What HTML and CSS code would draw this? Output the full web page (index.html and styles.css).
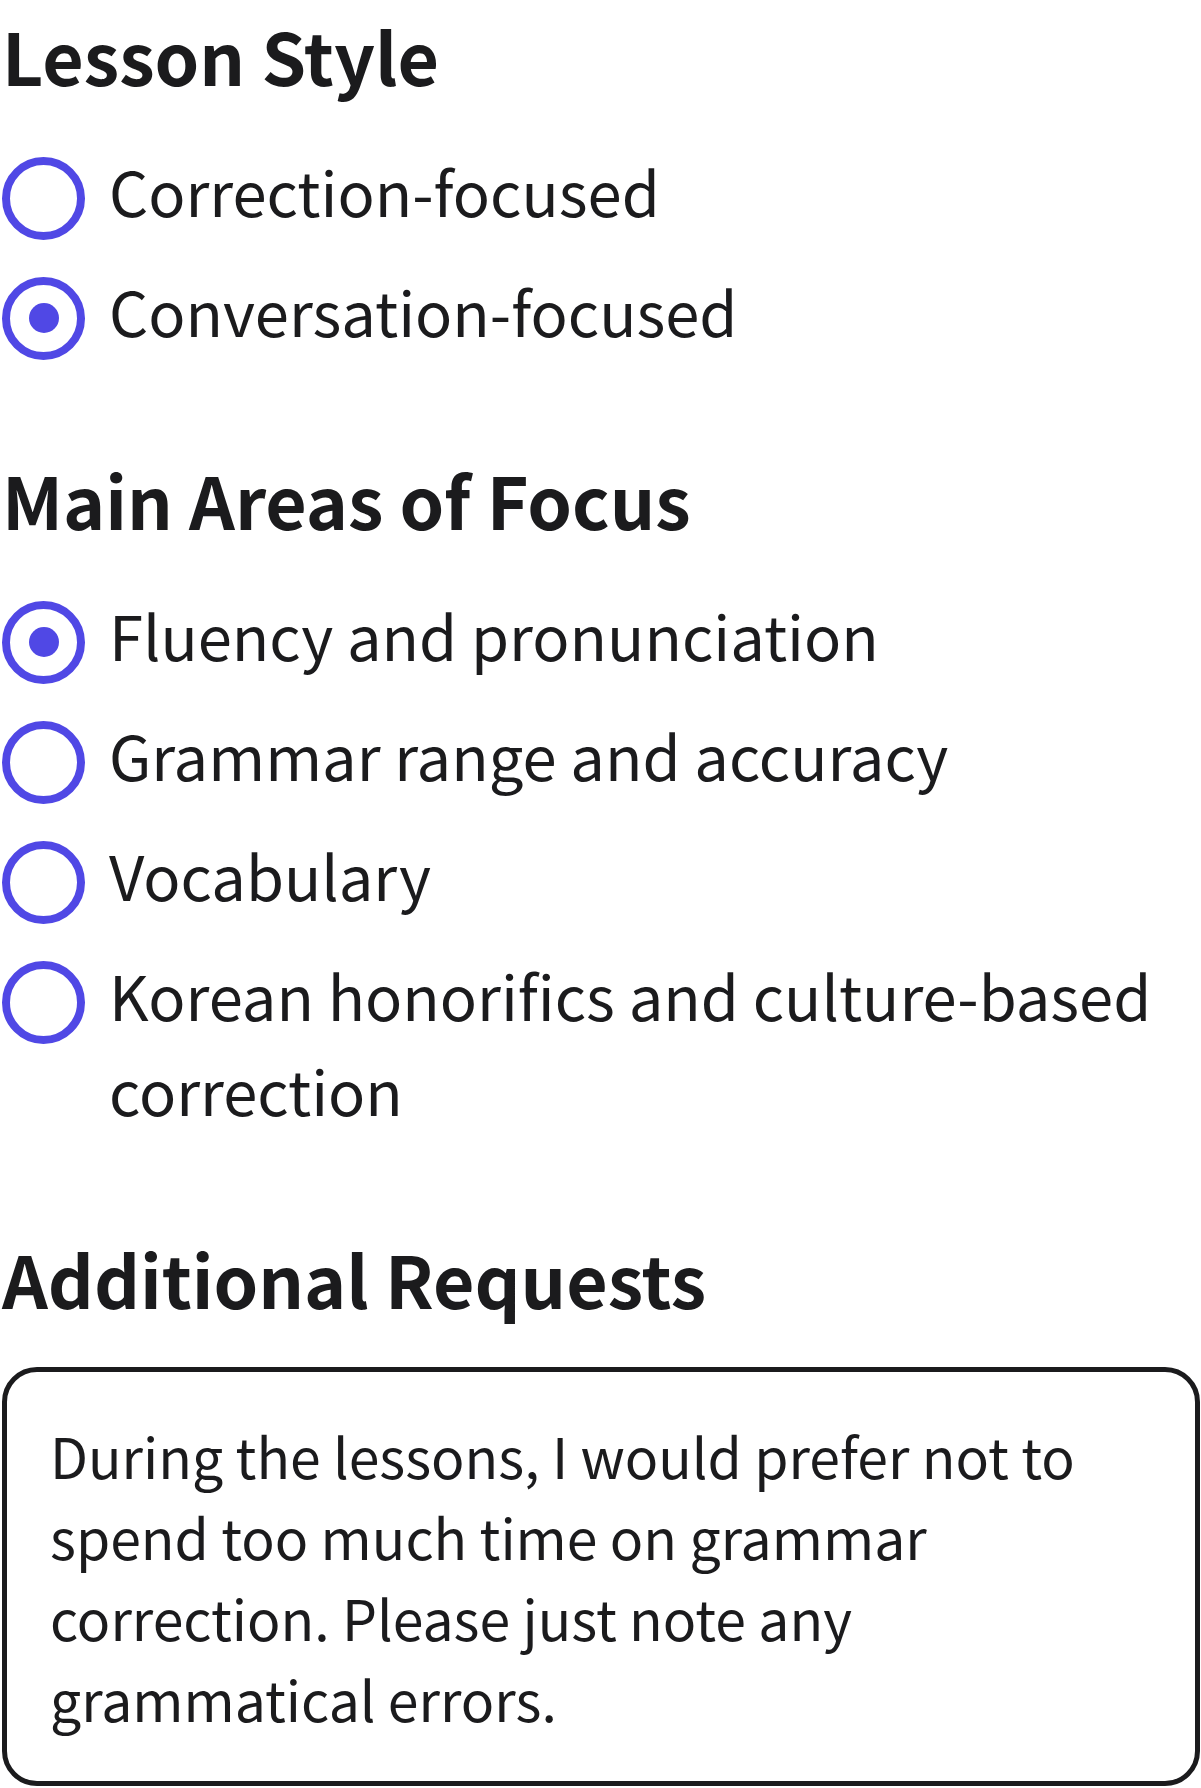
FILE: index.html
```html
<!DOCTYPE html>
<html lang="en">
<head>
<meta charset="utf-8">
<title>Lesson preferences</title>
<link rel="stylesheet" href="styles.css">
</head>
<body>
<main class="page">
  <section class="group">
    <h2 class="heading">Lesson Style</h2>
    <ul class="options">
      <li class="option"><span class="radio"></span><span class="label">Correction-focused</span></li>
      <li class="option"><span class="radio checked"></span><span class="label">Conversation-focused</span></li>
    </ul>
  </section>
  <section class="group">
    <h2 class="heading">Main Areas of Focus</h2>
    <ul class="options">
      <li class="option"><span class="radio checked"></span><span class="label">Fluency and pronunciation</span></li>
      <li class="option"><span class="radio"></span><span class="label">Grammar range and accuracy</span></li>
      <li class="option"><span class="radio"></span><span class="label">Vocabulary</span></li>
      <li class="option"><span class="radio"></span><span class="label">Korean honorifics and culture-based correction</span></li>
    </ul>
  </section>
  <section class="group">
    <h2 class="heading">Additional Requests</h2>
    <div class="textbox">During the lessons, I would prefer not to spend too much time on grammar correction. Please just note any grammatical errors.</div>
  </section>
</main>
</body>
</html>
```
FILE: styles.css
```css
html, body {
  margin: 0;
  padding: 0;
  background: #ffffff;
}
body {
  font-family: "Noto Sans CJK KR", "Noto Sans", sans-serif;
  color: #1b1b1d;
}
.page {
  padding: 0 1px 0 2px;
  display: flex;
  flex-direction: column;
  gap: 86px;
}
.group {
  display: flex;
  flex-direction: column;
  gap: 33px;
}
.heading {
  margin: 0;
  font-size: 71.5px;
  font-weight: 700;
  line-height: 110px;
  color: #1b1b1d;
}
.options {
  list-style: none;
  margin: 0;
  padding: 0;
  display: flex;
  flex-direction: column;
  gap: 25px;
}
.option {
  display: flex;
  align-items: flex-start;
  gap: 24px;
  font-size: 61.5px;
  line-height: 95px;
}
.radio {
  flex: none;
  box-sizing: border-box;
  width: 83px;
  height: 83px;
  margin: 13.5px 0 -1.5px;
  border: 8.5px solid #5048e5;
  border-radius: 50%;
  display: flex;
  align-items: center;
  justify-content: center;
}
.radio.checked::after {
  content: "";
  width: 30px;
  height: 30px;
  border-radius: 50%;
  background: #5048e5;
}
.label {
  flex: 1;
}
.textbox {
  box-sizing: border-box;
  width: 1198px;
  margin-top: 1px;
  border: 5px solid #1b1b1d;
  border-radius: 35px;
  padding: 43px 80px 42px 43px;
  font-size: 55.3px;
  line-height: 81px;
}
```
